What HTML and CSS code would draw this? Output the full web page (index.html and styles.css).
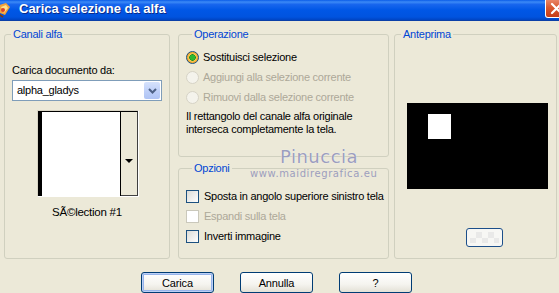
FILE: index.html
```html
<!DOCTYPE html>
<html lang="it">
<head>
    <meta charset="UTF-8">
    <title>Carica selezione da alfa</title>
    <link rel="stylesheet" href="styles.css">
</head>
<body>
    <div class="titlebar">
        <svg class="app-icon" width="16" height="16" viewBox="0 0 16 16">
            <path d="M1 3 L8 1 L12 5 L7 13 L2 11 Z" fill="#F2A23A"/>
            <path d="M3 5 L8 3 L10 6 L6 11 Z" fill="#FFE08A"/>
            <circle cx="5" cy="8" r="2" fill="#D8402A"/>
            <path d="M0 12 L5 15" stroke="#7A3A14" stroke-width="2"/>
        </svg>
        <span class="title">Carica selezione da alfa</span>
        <span class="close-btn">
            <svg width="13" height="13" viewBox="0 0 13 13">
                <path d="M2 2 L11 11 M11 2 L2 11" stroke="#fff" stroke-width="2.2" stroke-linecap="round"/>
            </svg>
        </span>
    </div>

    <div class="dialog">
        <div class="groups">
            <fieldset class="group group-channels">
                <legend>Canali alfa</legend>
                <div class="field-label">Carica documento da:</div>
                <div class="combo">
                    <span class="combo-value">alpha_gladys</span>
                    <span class="combo-btn">
                        <svg width="9" height="6" viewBox="0 0 9 6">
                            <path d="M1 1 L4.5 4.5 L8 1" fill="none" stroke="#4D6185" stroke-width="2"/>
                        </svg>
                    </span>
                </div>
                <div class="thumb">
                    <div class="thumb-img"></div>
                    <div class="thumb-scroll"><span class="thumb-arrow"></span></div>
                </div>
                <div class="thumb-name">SÃ©lection #1</div>
            </fieldset>

            <div class="col-mid">
                <fieldset class="group group-op">
                    <legend>Operazione</legend>
                    <div class="option-row">
                        <span class="radio checked"></span>
                        <span>Sostituisci selezione</span>
                    </div>
                    <div class="option-row disabled">
                        <span class="radio"></span>
                        <span>Aggiungi alla selezione corrente</span>
                    </div>
                    <div class="option-row disabled">
                        <span class="radio"></span>
                        <span>Rimuovi dalla selezione corrente</span>
                    </div>
                    <p class="op-note">Il rettangolo del canale alfa originale<br>interseca completamente la tela.</p>
                </fieldset>

                <fieldset class="group group-opt">
                    <legend>Opzioni</legend>
                    <div class="option-row">
                        <span class="check"></span>
                        <span>Sposta in angolo superiore sinistro tela</span>
                    </div>
                    <div class="option-row disabled">
                        <span class="check"></span>
                        <span>Espandi sulla tela</span>
                    </div>
                    <div class="option-row">
                        <span class="check"></span>
                        <span>Inverti immagine</span>
                    </div>
                </fieldset>
            </div>

            <fieldset class="group group-preview">
                <legend>Anteprima</legend>
                <svg class="preview-canvas" width="141" height="86" viewBox="0 0 141 86">
                    <rect width="141" height="86" fill="#000"/>
                    <rect x="21" y="11" width="23" height="25" fill="#fff"/>
                </svg>
                <div class="swatch-btn"><span class="swatch"></span></div>
            </fieldset>
        </div>

        <div class="buttons">
            <button class="btn default">Carica</button>
            <button class="btn">Annulla</button>
            <button class="btn">?</button>
        </div>
    </div>

    <div class="watermark">
        <div class="wm-name">Pinuccia</div>
        <div class="wm-site">www.maidiregrafica.eu</div>
    </div>
</body>
</html>
```

FILE: styles.css
```css
* {
    box-sizing: border-box;
}

body {
    margin: 0;
    width: 559px;
    height: 293px;
    overflow: hidden;
    position: relative;
    background: #ECE9D8;
    font-family: 'Liberation Sans', Arial, sans-serif;
    font-size: 11px;
    letter-spacing: -0.25px;
    color: #000;
}

/* title bar */
.titlebar {
    height: 21px;
    display: flex;
    align-items: flex-start;
    background: linear-gradient(180deg, #0A5CE8 0%, #3C8AF6 10%, #1866EE 22%, #0057E6 50%, #0053DF 85%, #0044C2 100%);
    border-bottom: 1px solid #0A3FA8;
    overflow: hidden;
}

.app-icon {
    flex: none;
    margin: 2px 0 0 -2px;
}

.title {
    margin-left: 5px;
    font-size: 13px;
    font-weight: bold;
    line-height: 17px;
    letter-spacing: 0;
    color: #fff;
    text-shadow: 1px 1px 0 #0A2A8A;
}

.close-btn {
    flex: none;
    margin-left: auto;
    margin-right: -8px;
    width: 22px;
    height: 18px;
    display: flex;
    align-items: center;
    justify-content: center;
    background: linear-gradient(180deg, #E98466 0%, #D9582F 45%, #C63C19 100%);
    border: 1px solid #fff;
    border-top: none;
    border-radius: 0 0 3px 3px;
}

/* dialog body */
.dialog {
    padding-top: 7px;
}

.groups {
    display: flex;
    align-items: flex-start;
    padding-left: 4px;
}

.group {
    margin: 0;
    padding: 0;
    min-width: 0;
    border: 1px solid #D0D0BF;
    border-radius: 3px;
}

.group legend {
    margin-left: 6px;
    padding: 0 2px;
    line-height: 13px;
    color: #0046D5;
}

.group-channels {
    width: 166px;
    height: 231px;
}

.field-label {
    margin: 23px 0 0 7px;
    line-height: 13px;
}

.combo {
    margin: 3px 0 0 7px;
    width: 150px;
    height: 21px;
    display: flex;
    align-items: center;
    background: #fff;
    border: 1px solid #7F9DB9;
}

.combo-value {
    flex: 1;
    padding-left: 4px;
    line-height: 13px;
}

.combo-btn {
    width: 16px;
    height: 17px;
    margin-right: 1px;
    display: flex;
    align-items: center;
    justify-content: center;
    background: linear-gradient(180deg, #D6E2FC 0%, #BCCEF8 60%, #AFC4F4 100%);
    border-radius: 2px;
}

.thumb {
    margin: 9px 0 0 32px;
    width: 102px;
    height: 87px;
    display: flex;
    border: 1px solid;
    border-color: #D8D4C4 #fff #fff #D8D4C4;
}

.thumb-img {
    width: 83px;
    background: #fff;
    border-top: 1px solid #000;
    border-left: 4px solid #000;
    border-right: 1px solid #000;
}

.thumb-scroll {
    flex: 1;
    display: flex;
    justify-content: center;
    align-items: flex-end;
    padding-bottom: 32px;
    background: #ECE9D8;
    border-top: 1px solid #000;
    border-right: 1px solid #404040;
    border-bottom: 1px solid #404040;
}

.thumb-arrow {
    width: 0;
    height: 0;
    border-left: 4px solid transparent;
    border-right: 4px solid transparent;
    border-top: 4px solid #000;
}

.thumb-name {
    margin-top: 9px;
    text-align: center;
    line-height: 13px;
    font-size: 11.5px;
}

/* middle column */
.col-mid {
    margin-left: 8px;
    width: 211px;
    display: flex;
    flex-direction: column;
}

.group-op {
    height: 129px;
    padding-left: 7px;
}

.group-op .option-row:first-of-type {
    margin-top: 6px;
}

.option-row {
    height: 20px;
    display: flex;
    align-items: center;
    gap: 4px;
}

.option-row.disabled {
    color: #ACA899;
}

.radio {
    flex: none;
    width: 13px;
    height: 13px;
    border-radius: 50%;
    border: 1px solid #1C5180;
    background: radial-gradient(circle at 65% 65%, #fff 0%, #DCDCD7 100%);
}

.radio.checked {
    background: radial-gradient(circle, #2FB62F 0 2.5px, #1A8F1A 3px, #F9C95B 3.5px, #F1A421 5.5px);
}

.disabled .radio {
    border-color: #D6D3C6;
    background: #F4F3EC;
}

.op-note {
    margin: 3px 0 0;
    line-height: 13px;
}

.group-opt {
    margin-top: 5px;
    height: 97px;
    padding-left: 7px;
}

.group-opt .option-row:first-of-type {
    margin-top: 11px;
}

.check {
    flex: none;
    width: 13px;
    height: 13px;
    margin-right: 1px;
    border: 1px solid #1C5180;
    background: linear-gradient(135deg, #DCDCD7 0%, #fff 100%);
}

.disabled .check {
    border-color: #CAC8BB;
    background: #fff;
}

/* preview */
.group-preview {
    margin-left: 5px;
    width: 163px;
    height: 231px;
}

.preview-canvas {
    display: block;
    margin: 62px 0 0 12px;
}

.swatch-btn {
    margin: 39px 0 0 71px;
    width: 37px;
    height: 19px;
    padding: 3px;
    border: 1px solid #1C4F8A;
    border-radius: 3px;
    background: #F7F7F4;
}

.swatch {
    display: block;
    height: 100%;
    background:
        linear-gradient(45deg, #E6E6E6 25%, transparent 25%, transparent 75%, #E6E6E6 75%),
        linear-gradient(45deg, #E6E6E6 25%, transparent 25%, transparent 75%, #E6E6E6 75%);
    background-size: 12px 12px;
    background-position: 0 0, 6px 6px;
    opacity: 0.8;
}

/* buttons */
.buttons {
    margin-top: 13px;
    padding-left: 141px;
    display: flex;
    gap: 26px;
}

.btn {
    width: 73px;
    height: 21px;
    padding: 0;
    font-family: inherit;
    font-size: 11px;
    letter-spacing: -0.15px;
    color: #000;
    border: 1px solid #003C74;
    border-radius: 3px;
    background: linear-gradient(180deg, #FFFFFF 0%, #F5F4EF 60%, #E3E1D6 100%);
}

.btn.default {
    box-shadow: inset 0 0 0 1px #BCD0F5, inset 0 0 0 2px #97B4EB;
}

/* watermark */
.watermark {
    position: absolute;
    left: 250px;
    top: 146px;
    color: #9C9EBE;
    letter-spacing: 0;
}

.wm-name {
    margin-left: 30px;
    font-family: 'DejaVu Sans', sans-serif;
    font-size: 18px;
    line-height: 22px;
    letter-spacing: 0.5px;
    text-shadow: 0 0 1px #fff;
}

.wm-site {
    font-family: 'DejaVu Sans', sans-serif;
    font-size: 10px;
    line-height: 12px;
    letter-spacing: 0.6px;
}
```
